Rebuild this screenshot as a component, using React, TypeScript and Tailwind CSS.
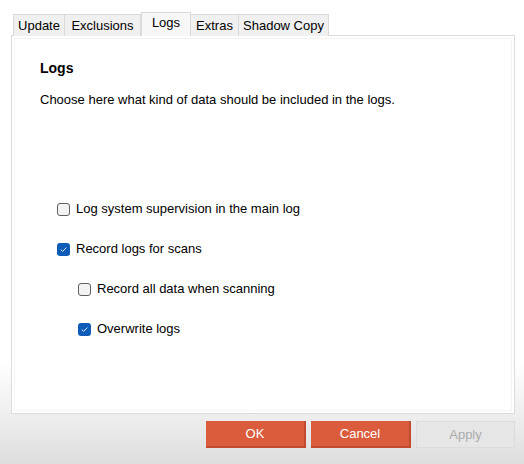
import React from "react";

const font = { fontFamily: '"Liberation Sans", Arial, sans-serif' };

function Check({ checked }: { checked: boolean }) {
  return checked ? (
    <span className="w-[13px] h-[13px] rounded-[3px] bg-[#0f5cb8] flex items-center justify-center shrink-0">
      <svg width="9" height="9" viewBox="0 0 9 9">
        <path d="M1.8 4.6 L3.7 6.4 L7.3 2.6" fill="none" stroke="#dfe9f7" strokeWidth="1" />
      </svg>
    </span>
  ) : (
    <span className="w-[13px] h-[13px] rounded-[3px] border border-[#5f5f5f] bg-[#f3f3f3] shrink-0" />
  );
}

function Row({ checked, label, indent }: { checked: boolean; label: string; indent?: boolean }) {
  return (
    <div className={`flex items-center gap-[6px] h-[16px] ${indent ? "pl-[21px]" : ""}`}>
      <Check checked={checked} />
      <span className="text-[13px] leading-[16px] text-black">{label}</span>
    </div>
  );
}

export default function App() {
  const tabs = [
    { name: "Update", w: 52 },
    { name: "Exclusions", w: 76 },
    { name: "Logs", w: 50, active: true },
    { name: "Extras", w: 48 },
    { name: "Shadow Copy", w: 90 },
  ];
  return (
    <div
      className="w-[524px] h-[464px] overflow-hidden bg-[linear-gradient(to_bottom,#ffffff_0%,#ffffff_78%,#f0f0f0_88%,#dedede_100%)] flex flex-col pt-[12px] pl-[11px] pr-[9px]"
      style={font}
    >
      <div className="flex items-end pl-[2px] h-[24px] relative z-10">
        {tabs.map((t, i) =>
          t.active ? (
            <div
              key={t.name}
              style={{ width: t.w }}
              className="h-[24px] bg-[#f7f7f7] border border-b-0 border-[#dadada] flex justify-center pt-[2px] text-[13px] leading-[16px] text-black"
            >
              {t.name}
            </div>
          ) : (
            <div
              key={t.name}
              style={{ width: t.w }}
              className={`h-[22px] bg-[#f0f0f0] border-t border-r border-[#dadada] ${i === 0 ? "border-l" : ""} flex justify-center pt-[3px] text-[13px] leading-[16px] text-black`}
            >
              {t.name}
            </div>
          )
        )}
      </div>
      <div className="-mt-px w-[504px] h-[379px] border border-[#dcdcdc] bg-white p-[2px]">
        <div className="w-full h-full border border-[#f4f4f4] flex flex-col pl-[25px] pt-[21px]">
          <div className="text-[14px] leading-[16px] font-bold text-black">Logs</div>
          <div className="mt-[16px] text-[13px] leading-[16px] text-black">
            Choose here what kind of data should be included in the logs.
          </div>
          <div className="mt-[93px] pl-[17px] flex flex-col gap-[24px]">
            <Row checked={false} label="Log system supervision in the main log" />
            <Row checked={true} label="Record logs for scans" />
            <Row checked={false} label="Record all data when scanning" indent />
            <Row checked={true} label="Overwrite logs" indent />
          </div>
        </div>
      </div>
      <div className="flex justify-end gap-[5px] mt-[7px]">
        <button className="w-[100px] h-[27px] bg-[#db5b3d] border-b-2 border-r-2 border-[#c34a2e] text-white text-[13px] leading-[16px]">
          OK
        </button>
        <button className="w-[100px] h-[27px] bg-[#db5b3d] border-b-2 border-r-2 border-[#c34a2e] text-white text-[13px] leading-[16px]">
          Cancel
        </button>
        <button className="w-[99px] h-[27px] bg-[#e6e6e6] border border-[#dcdcdc] text-[#ababab] text-[13px] leading-[16px]">
          Apply
        </button>
      </div>
    </div>
  );
}
